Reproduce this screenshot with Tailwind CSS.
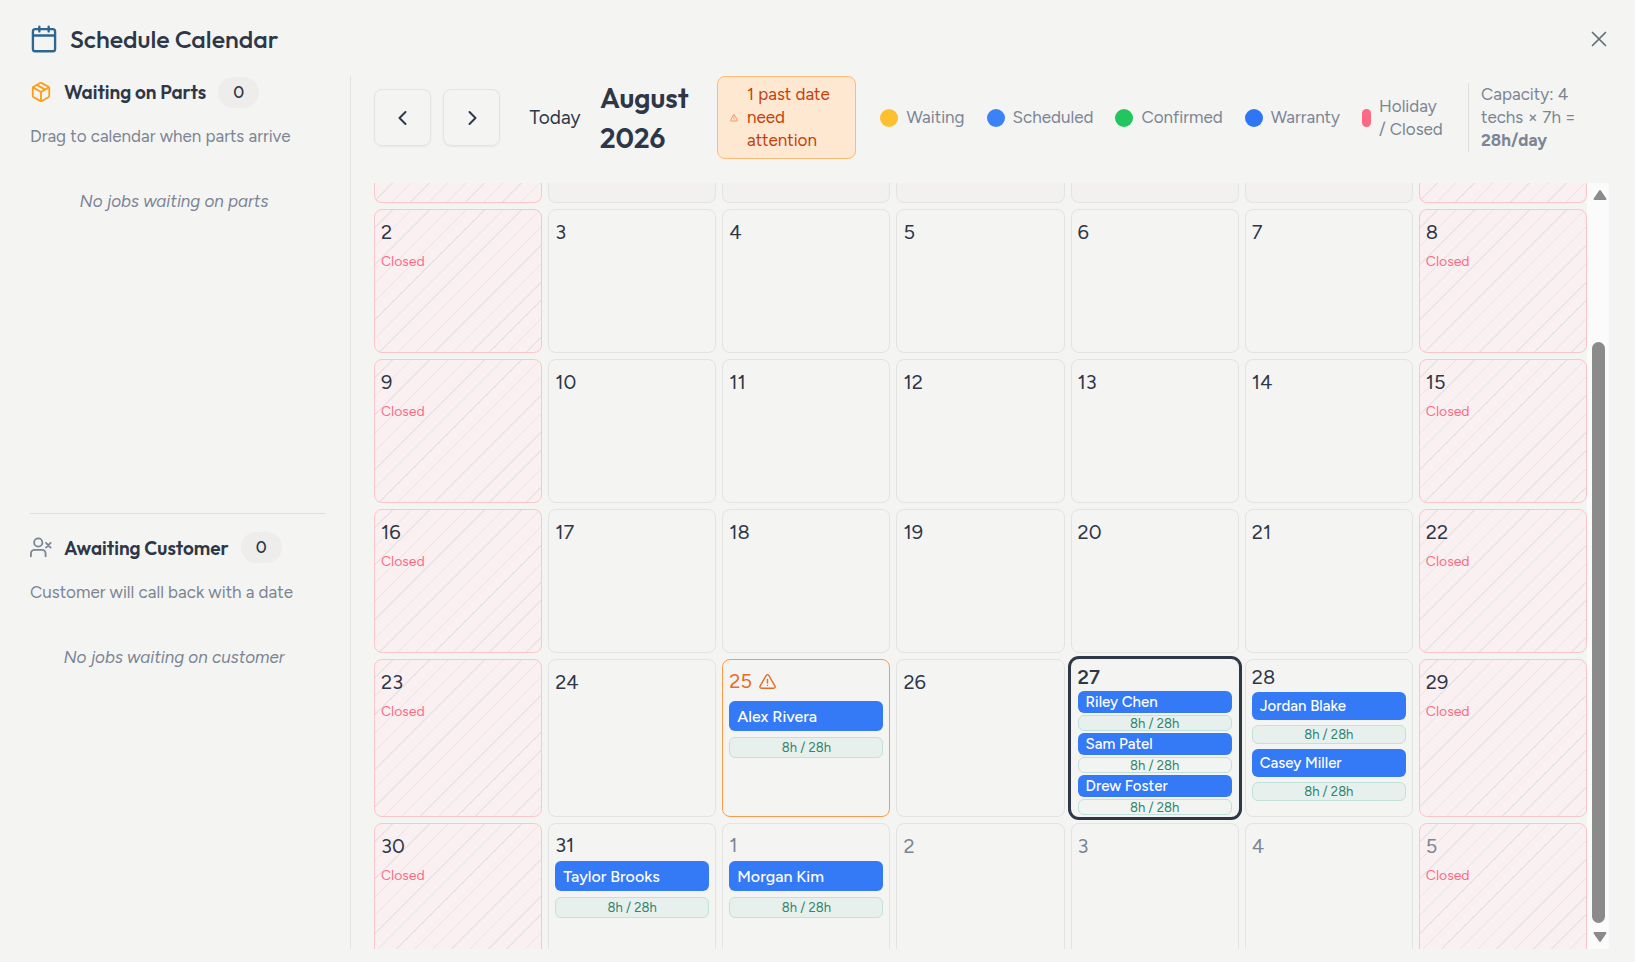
<!DOCTYPE html>
<html lang="en">
<head>
    <meta charset="UTF-8">
    <meta name="viewport" content="width=device-width, initial-scale=1.0">
    <title>Schedule Calendar</title>
    <script src="https://cdn.jsdelivr.net/npm/@tailwindcss/browser@4"></script>
</head>
<body class="h-screen overflow-hidden bg-[#f4f4f3] font-[Figtree,Inter,sans-serif] text-[17px] leading-[23px] text-[#2d3748] flex flex-col pb-[13px]">
    <!-- Title bar -->
    <header class="h-[76px] shrink-0 flex items-center justify-between pt-0.5 pl-[30px] pr-[26px]">
        <div class="flex items-center gap-3">
            <svg class="w-7 h-7 text-[#2f6690]" viewBox="0 0 24 24" fill="none" stroke="currentColor" stroke-width="2" stroke-linecap="round" stroke-linejoin="round"><path d="M8 1.500v4M16 1.500v4M3 9h18"/><rect x="2.500" y="3.500" width="19" height="19" rx="2"/></svg>
            <h1 class="font-[Outfit,Lato,sans-serif] text-[25px] leading-8 font-medium">Schedule Calendar</h1>
        </div>
        <button type="button" aria-label="Close" class="w-5 h-5 text-[#646c79]">
            <svg class="w-5 h-5" viewBox="0 0 20 20" fill="none" stroke="currentColor" stroke-width="1.700" stroke-linecap="round"><path d="M3.500 3.500l13 13M16.500 3.500l-13 13"/></svg>
        </button>
    </header>

    <div class="flex-1 min-h-0 flex">
        <!-- Sidebar -->
        <aside class="w-[351px] shrink-0 border-r border-[#e3e3e1] pl-[30px] pr-6 grid grid-rows-2">
            <section>
                <div class="flex items-center gap-3 h-8">
                    <svg class="w-[22px] h-[22px] text-[#f9a01b]" viewBox="0 0 24 24" fill="none" stroke="currentColor" stroke-width="2" stroke-linecap="round" stroke-linejoin="round"><path d="M11 21.730a2 2 0 0 0 2 0l7-4A2 2 0 0 0 21 16V8a2 2 0 0 0-1-1.730l-7-4a2 2 0 0 0-2 0l-7 4A2 2 0 0 0 3 8v8a2 2 0 0 0 1 1.730z"/><path d="M12 22V12M3.290 7L12 12l8.710-5M7.500 4.270l9 5.150"/></svg>
                    <h2 class="font-[Outfit,Lato,sans-serif] text-[19px] leading-7 font-semibold">Waiting on Parts</h2>
                    <span class="w-[41px] h-[31px] rounded-full bg-[#eeedeb] grid place-items-center font-medium">0</span>
                </div>
                <p class="mt-[17px] text-[#7b8594]">Drag to calendar when parts arrive</p>
                <p class="mt-[42px] pl-4 pr-6 text-center italic text-[#7b8594]">No jobs waiting on parts</p>
            </section>
            <section class="border-t border-[#dfdfdd] pt-[18px]">
                <div class="flex items-center gap-3 h-8">
                    <svg class="w-[22px] h-[22px] text-[#7b8594]" viewBox="0 0 24 24" fill="none" stroke="currentColor" stroke-width="2" stroke-linecap="round" stroke-linejoin="round"><path d="M17 21v-3a4 4 0 0 0-4-4H5a4 4 0 0 0-4 4v3"/><circle cx="9" cy="6" r="4.500"/><path d="M17.500 6.500l5 5M22.500 6.500l-5 5"/></svg>
                    <h2 class="font-[Outfit,Lato,sans-serif] text-[19px] leading-7 font-semibold">Awaiting Customer</h2>
                    <span class="w-[41px] h-[31px] rounded-full bg-[#eeedeb] grid place-items-center font-medium">0</span>
                </div>
                <p class="mt-[17px] text-[#7b8594]">Customer will call back with a date</p>
                <p class="mt-[42px] pl-4 pr-6 text-center italic text-[#7b8594]">No jobs waiting on customer</p>
            </section>
        </aside>

        <main class="flex-1 min-w-0 flex flex-col pl-[23px] pr-[26px]">
            <!-- Toolbar -->
            <div class="h-[83px] shrink-0 flex items-center">
                <button type="button" aria-label="Previous month" class="w-[57px] h-[57px] rounded-lg border border-[#e3e3e1] shadow-xs grid place-items-center">
                    <svg class="w-5 h-5" viewBox="0 0 20 20" fill="none" stroke="currentColor" stroke-width="2" stroke-linecap="round" stroke-linejoin="round"><path d="M12.500 4l-6 6 6 6"/></svg>
                </button>
                <button type="button" aria-label="Next month" class="ml-3 w-[57px] h-[57px] rounded-lg border border-[#e3e3e1] shadow-xs grid place-items-center">
                    <svg class="w-5 h-5" viewBox="0 0 20 20" fill="none" stroke="currentColor" stroke-width="2" stroke-linecap="round" stroke-linejoin="round"><path d="M7.500 4l6 6-6 6"/></svg>
                </button>
                <button type="button" class="w-[100px] pl-[10px] text-center text-[19px]">Today</button>
                <h2 class="w-[117px] shrink-0 font-[Outfit,Lato,sans-serif] text-[28px] leading-10 font-semibold">August 2026</h2>
                <button type="button" class="w-[139px] h-[83px] shrink-0 rounded-lg border border-[#fdba74] bg-[#fee8d2] pl-3 pr-4 flex items-center gap-[9px] text-left text-[#c2410c]">
                    <svg class="w-2 h-2 shrink-0 text-[#f08a5a]" viewBox="0 0 24 24" fill="none" stroke="currentColor" stroke-width="2.500" stroke-linecap="round" stroke-linejoin="round"><path d="M10.300 3.200L2 18a2 2 0 0 0 1.700 3h16.600a2 2 0 0 0 1.700-3L13.700 3.200a2 2 0 0 0-3.400 0zM12 9v4M12 17v0"/></svg>
                    <span>1 past date need attention</span>
                </button>
                <ul class="ml-auto flex items-center gap-[22px] text-[#7b8594]">
                    <li class="flex items-center gap-2"><span class="w-[18px] h-[18px] rounded-full bg-[#fdc02f]"></span>Waiting</li>
                    <li class="flex items-center gap-2"><span class="w-[18px] h-[18px] rounded-full bg-[#3b82f6]"></span>Scheduled</li>
                    <li class="flex items-center gap-2"><span class="w-[18px] h-[18px] rounded-full bg-[#22c55e]"></span>Confirmed</li>
                    <li class="flex items-center gap-2"><span class="w-[18px] h-[18px] rounded-full bg-[#2f76f6]"></span>Warranty</li>
                    <li class="flex items-center gap-2"><span class="w-[9px] h-[18px] rounded-full bg-[#fb6a84]"></span><span class="w-[65px]">Holiday / Closed</span></li>
                </ul>
                <p class="ml-6 w-[141px] shrink-0 border-l border-[#dfdfdd] pl-3 pr-6 text-[#7b8594]">Capacity: 4 techs × 7h = <strong class="font-bold">28h/day</strong></p>
            </div>

            <!-- Month grid -->
            <div class="mt-6 flex-1 min-h-0 flex">
                <div id="grid" class="flex-1 min-w-0 overflow-hidden grid grid-cols-7 grid-rows-[20px_144px_144px_144px_158px_150px] gap-1.5"></div>
                <div class="w-[22px] bg-[#fbfbfb] flex flex-col items-center py-[6px]">
                    <svg class="ml-[3px] w-[14px] h-[12px]" viewBox="0 0 14 12" fill="#8b8b8b" stroke="#8b8b8b" stroke-width="2" stroke-linejoin="round"><path d="M7 2l5.500 8h-11z"/></svg>
                    <div class="mt-[141px] mb-2 flex-1 w-[13px] rounded-full bg-[#8b8b8b]"></div>
                    <svg class="ml-[3px] w-[14px] h-[12px]" viewBox="0 0 14 12" fill="#8b8b8b" stroke="#8b8b8b" stroke-width="2" stroke-linejoin="round"><path d="M7 10l5.500-8h-11z"/></svg>
                </div>
            </div>
        </main>
    </div>

    <script>
        const jobs = {
            '25': ['Alex Rivera'],
            '27': ['Riley Chen', 'Sam Patel', 'Drew Foster'],
            '28': ['Jordan Blake', 'Casey Miller'],
            '31': ['Taylor Brooks'],
            '1': ['Morgan Kim'],
        };

        // Chip sizes shrink as a day fills up
        const sizes = {
            1: { list: 'mt-0.5 gap-1.5', chip: 'h-[30px] text-[16px]', pill: 'h-[21px]' },
            2: { list: 'mt-px gap-[5px]', chip: 'h-7 text-[15px]', pill: 'h-[19px]' },
            3: { list: 'gap-0.5', chip: 'h-[22px] text-[15px]', pill: 'h-4' },
        };

        const warning = '<svg class="w-[17px] h-[17px]" viewBox="0 0 24 24" fill="none" stroke="currentColor" stroke-width="2" stroke-linecap="round" stroke-linejoin="round"><path d="M10.300 3.200L1.500 18.500a2 2 0 0 0 1.700 3h17.600a2 2 0 0 0 1.700-3L13.700 3.200a2 2 0 0 0-3.400 0zM12 9v5M12 17.500v0"/></svg>';

        function dayCell(day, index) {
            const closed = index % 7 === 0 || index % 7 === 6;
            const outside = index > 29;
            const today = index === 25;
            const past = index === 23;
            const names = (index > 20 && jobs[day]) || [];
            let border = 'border-[#e3e3e1]';
            if (closed) border = 'border-[#fcc5cb] bg-[#fbf0f1] bg-[repeating-linear-gradient(135deg,transparent_0_12px,#e6e4e4_12px_13px)]';
            if (past) border = 'border-[#fb9a4b]';
            if (today) border = 'border-transparent ring-3 ring-[#2d3748] relative';
            let tone = outside ? 'text-[#7b8594]' : 'text-[#2d3748]';
            if (past) tone = 'text-[#ea6a1f]';

            let html = `<div class="rounded-lg border min-w-0 px-1.5 ${names.length > 1 ? 'pt-1' : 'pt-2'} ${border}">`;
            html += `<div class="flex items-center gap-[7px] text-[20px] ${tone} ${today ? 'font-semibold' : ''} ${names.length ? 'leading-[27px]' : 'leading-7'}">${day}${past ? warning : ''}</div>`;
            if (closed) html += '<div class="mt-1.5 text-[14px] leading-5 text-[#fb6a84]">Closed</div>';
            if (names.length) {
                const s = sizes[names.length];
                html += `<div class="${past ? 'pt-1' : ''}"><div class="flex flex-col ${s.list}">`;
                names.forEach((name, n) => {
                    const fill = names.length === 3 && n > 0 ? 'bg-[#f2f4f2]' : 'bg-[#e7f0ec]';
                    html += `<button type="button" class="shrink-0 rounded-md bg-[#3479f6] px-2 text-left font-medium text-white flex items-center ${s.chip}">${name}</button>`;
                    html += `<div class="shrink-0 rounded-md border border-[#bfe3da] ${fill} text-[13px] leading-none text-[#2f8570] grid place-items-center ${s.pill}">8h / 28h</div>`;
                });
                html += '</div></div>';
            }
            return html + '</div>';
        }

        // Tail of the previous week, scrolled mostly out of view
        let cells = '';
        for (let i = 0; i < 7; i++) {
            cells += i === 0 || i === 6
                ? '<div class="rounded-b-lg border border-t-0 border-[#fcc5cb] bg-[#fbf0f1] bg-[repeating-linear-gradient(135deg,transparent_0_12px,#e6e4e4_12px_13px)]"></div>'
                : '<div class="rounded-b-lg border border-t-0 border-[#e3e3e1] bg-[#f2f1ef]"></div>';
        }
        for (let i = 0; i < 35; i++) {
            cells += dayCell(i + 2 > 31 ? i - 29 : i + 2, i);
        }
        document.getElementById('grid').innerHTML = cells;
    </script>
</body>
</html>
